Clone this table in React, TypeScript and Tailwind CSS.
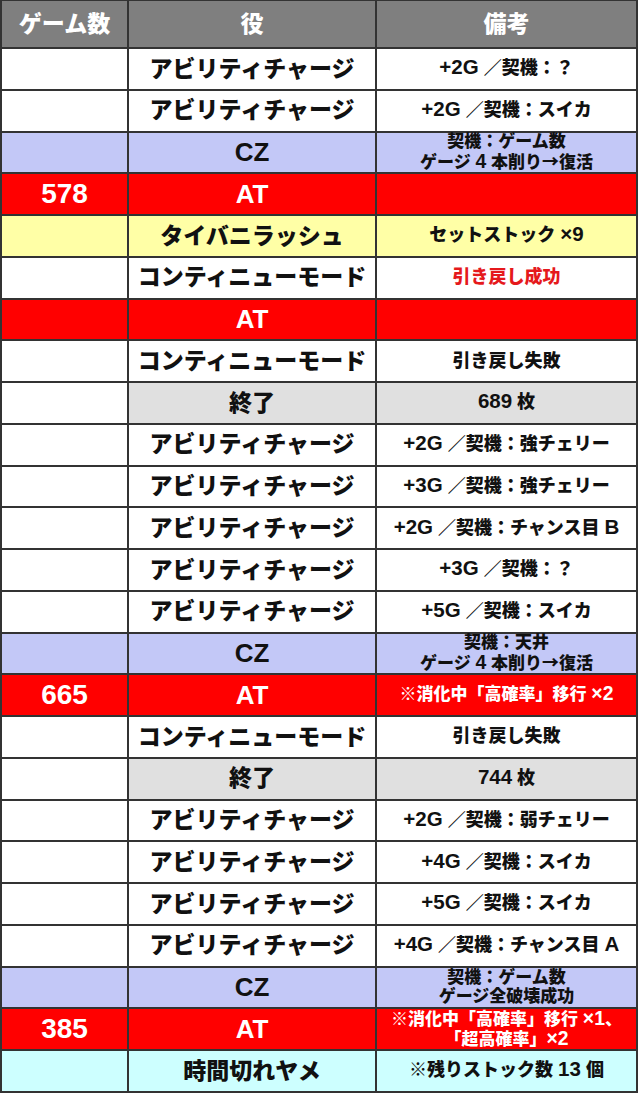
import React from "react";

type Row = {
  game?: string;
  role: string;
  note: string[];
  bg: string;
  gameBg?: string;
  dark?: boolean;
  noteClass?: string;
};

const WHITE = "bg-white";
const CZ = "bg-[#c3c8f7]";
const RED = "bg-[#ff0000]";
const YELLOW = "bg-[#ffffa6]";
const GRAY = "bg-[#e0e0e0]";
const CYAN = "bg-[#cdffff]";

const TWO = "text-[17px] leading-[19px]";

// latin runs are set a bit larger, like the gothic font in the picture
const Line = ({ text }: { text: string }) => (
  <>
    {text.split(/([+0-9A-Z×]+)/).map((part, i) =>
      /^[+0-9A-Z×]+$/.test(part) ? (
        <span key={i} className="text-[1.14em] leading-none">{part}</span>
      ) : part.includes("→") ? (
        <span key={i}>
          {part.split("→")[0]}
          <span style={{ fontFamily: '"Noto Sans CJK JP", sans-serif' }}>→</span>
          {part.split("→")[1]}
        </span>
      ) : (
        <span key={i}>{part}</span>
      )
    )}
  </>
);

const ac = (note: string): Row => ({ role: "アビリティチャージ", note: [note], bg: WHITE });

const rows: Row[] = [
  ac("+2G ／契機：？"),
  ac("+2G ／契機：スイカ"),
  { role: "CZ", note: ["契機：ゲーム数", "ゲージ 4 本削り→復活"], bg: CZ, gameBg: CZ, noteClass: TWO },
  { game: "578", role: "AT", note: [], bg: RED, gameBg: RED, dark: true },
  { role: "タイバニラッシュ", note: ["セットストック ×9"], bg: YELLOW, gameBg: YELLOW },
  { role: "コンティニューモード", note: ["引き戻し成功"], bg: WHITE, noteClass: "text-[18px] text-[#e5191c]" },
  { role: "AT", note: [], bg: RED, gameBg: RED, dark: true },
  { role: "コンティニューモード", note: ["引き戻し失敗"], bg: WHITE },
  { role: "終了", note: ["689 枚"], bg: GRAY, gameBg: WHITE },
  ac("+2G ／契機：強チェリー"),
  ac("+3G ／契機：強チェリー"),
  ac("+2G ／契機：チャンス目 B"),
  ac("+3G ／契機：？"),
  ac("+5G ／契機：スイカ"),
  { role: "CZ", note: ["契機：天井", "ゲージ 4 本削り→復活"], bg: CZ, gameBg: CZ, noteClass: TWO },
  { game: "665", role: "AT", note: ["※消化中「高確率」移行 ×2"], bg: RED, gameBg: RED, dark: true, noteClass: "text-[17px]" },
  { role: "コンティニューモード", note: ["引き戻し失敗"], bg: WHITE },
  { role: "終了", note: ["744 枚"], bg: GRAY, gameBg: WHITE },
  ac("+2G ／契機：弱チェリー"),
  ac("+4G ／契機：スイカ"),
  ac("+5G ／契機：スイカ"),
  ac("+4G ／契機：チャンス目 A"),
  { role: "CZ", note: ["契機：ゲーム数", "ゲージ全破壊成功"], bg: CZ, gameBg: CZ, noteClass: TWO },
  { game: "385", role: "AT", note: ["※消化中「高確率」移行 ×1、", "「超高確率」×2"], bg: RED, gameBg: RED, dark: true, noteClass: TWO },
  { role: "時間切れヤメ", note: ["※残りストック数 13 個"], bg: CYAN, gameBg: CYAN },
];

const font = { fontFamily: '"Liberation Sans", "Noto Sans CJK JP", sans-serif' };

export default function App() {
  return (
    <div className="h-[1104px] w-[640px] bg-white" style={font}>
      <div className="w-[638px] border-l-2 border-t border-[#333]">
        <div className="flex h-[48px] border-b-2 border-[#333] bg-[#7f7f7f] text-[23px] font-black text-white">
          <div className="flex w-[127px] items-center justify-center border-r-2 border-[#333]">ゲーム数</div>
          <div className="flex w-[248px] items-center justify-center border-r-2 border-[#333]">役</div>
          <div className="flex flex-1 items-center justify-center border-r-2 border-[#333]">備考</div>
        </div>
        {rows.map((r, i) => (
          <div key={i} className="flex h-[41.76px] border-b-2 border-[#333] font-black">
            <div className={`flex w-[127px] items-center justify-center border-r-2 border-[#333] text-[28px] text-white ${r.gameBg ?? WHITE}`}>
              {r.game}
            </div>
            <div className={`flex w-[248px] items-center justify-center border-r-2 border-[#333] ${r.bg} ${r.dark ? "text-white" : "text-[#111]"} ${r.role === "CZ" || r.role === "AT" ? "text-[26px]" : "text-[23px]"}`}>
              {r.role}
            </div>
            <div className={`flex flex-1 flex-col items-center justify-center border-r-2 border-[#333] text-center ${r.bg} ${r.dark ? "text-white" : "text-[#111]"} ${r.noteClass ?? "text-[18px]"}`}>
              {r.note.map((line, j) => (
                <div key={j} className="whitespace-nowrap">
                  <Line text={line} />
                </div>
              ))}
            </div>
          </div>
        ))}
      </div>
    </div>
  );
}
